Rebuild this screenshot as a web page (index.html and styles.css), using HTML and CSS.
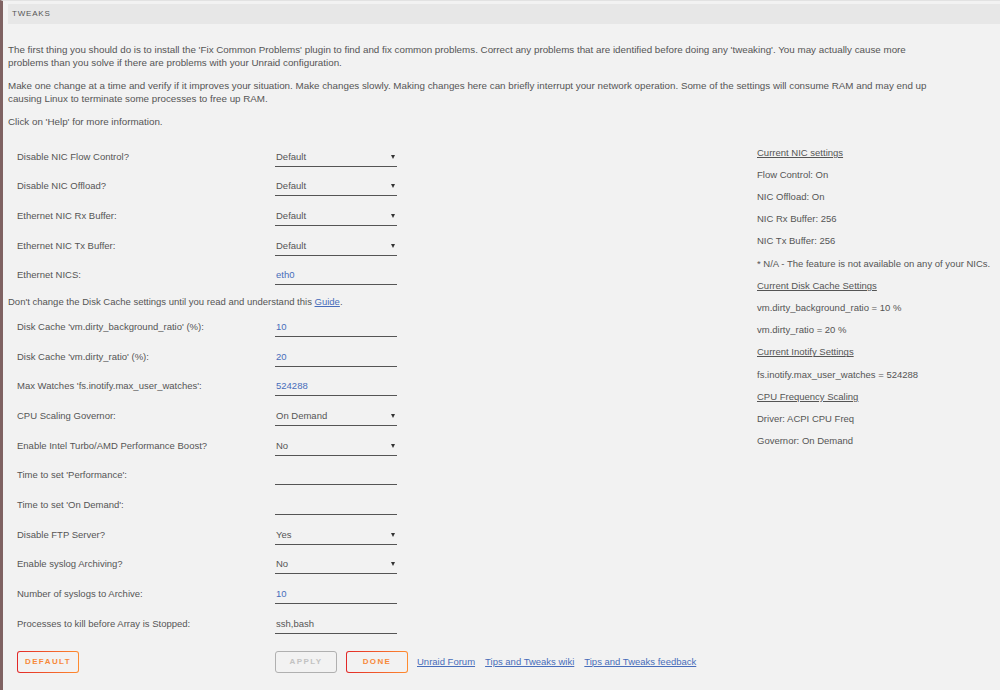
FILE: index.html
```html
<!DOCTYPE html>
<html>
<head>
<meta charset="utf-8">
<title>Tweaks</title>
<link rel="stylesheet" href="styles.css">
</head>
<body>
<div class="page">
  <div class="title">TWEAKS</div>
  <p class="intro">The first thing you should do is to install the 'Fix Common Problems' plugin to find and fix common problems. Correct any problems that are identified before doing any 'tweaking'. You may actually cause more<br>problems than you solve if there are problems with your Unraid configuration.</p>
  <p class="intro">Make one change at a time and verify if it improves your situation. Make changes slowly. Making changes here can briefly interrupt your network operation. Some of the settings will consume RAM and may end up<br>causing Linux to terminate some processes to free up RAM.</p>
  <p class="intro">Click on 'Help' for more information.</p>

  <div class="main">
    <div class="form">
      <div class="row"><div class="label">Disable NIC Flow Control?</div><div class="field select">Default</div></div>
      <div class="row"><div class="label">Disable NIC Offload?</div><div class="field select">Default</div></div>
      <div class="row"><div class="label">Ethernet NIC Rx Buffer:</div><div class="field select">Default</div></div>
      <div class="row"><div class="label">Ethernet NIC Tx Buffer:</div><div class="field select">Default</div></div>
      <div class="row"><div class="label">Ethernet NICS:</div><div class="field input blue">eth0</div></div>
      <div class="note">Don't change the Disk Cache settings until you read and understand this <a href="#">Guide</a>.</div>
      <div class="row"><div class="label">Disk Cache 'vm.dirty_background_ratio' (%):</div><div class="field input blue">10</div></div>
      <div class="row"><div class="label">Disk Cache 'vm.dirty_ratio' (%):</div><div class="field input blue">20</div></div>
      <div class="row"><div class="label">Max Watches 'fs.inotify.max_user_watches':</div><div class="field input blue">524288</div></div>
      <div class="row"><div class="label">CPU Scaling Governor:</div><div class="field select">On Demand</div></div>
      <div class="row"><div class="label">Enable Intel Turbo/AMD Performance Boost?</div><div class="field select">No</div></div>
      <div class="row"><div class="label">Time to set 'Performance':</div><div class="field input"></div></div>
      <div class="row"><div class="label">Time to set 'On Demand':</div><div class="field input"></div></div>
      <div class="row"><div class="label">Disable FTP Server?</div><div class="field select">Yes</div></div>
      <div class="row"><div class="label">Enable syslog Archiving?</div><div class="field select">No</div></div>
      <div class="row"><div class="label">Number of syslogs to Archive:</div><div class="field input blue">10</div></div>
      <div class="row"><div class="label">Processes to kill before Array is Stopped:</div><div class="field input">ssh,bash</div></div>
      <div class="actions">
        <div class="left"><button class="btn">DEFAULT</button></div>
        <div class="right">
          <button class="btn disabled">APPLY</button>
          <button class="btn">DONE</button>
          <a href="#">Unraid Forum</a>
          <a href="#">Tips and Tweaks wiki</a>
          <a href="#">Tips and Tweaks feedback</a>
        </div>
      </div>
    </div>
    <div class="info">
      <div class="line head">Current NIC settings</div>
      <div class="line">Flow Control: On</div>
      <div class="line">NIC Offload: On</div>
      <div class="line">NIC Rx Buffer: 256</div>
      <div class="line">NIC Tx Buffer: 256</div>
      <div class="line">* N/A - The feature is not available on any of your NICs.</div>
      <div class="line head">Current Disk Cache Settings</div>
      <div class="line">vm.dirty_background_ratio = 10 %</div>
      <div class="line">vm.dirty_ratio = 20 %</div>
      <div class="line head">Current Inotify Settings</div>
      <div class="line">fs.inotify.max_user_watches = 524288</div>
      <div class="line head">CPU Frequency Scaling</div>
      <div class="line">Driver: ACPI CPU Freq</div>
      <div class="line">Governor: On Demand</div>
    </div>
  </div>
</div>
</body>
</html>
```
FILE: styles.css
```css
html, body {
  margin: 0;
  padding: 0;
  background: #f2f2f2;
}
body {
  font-family: "Liberation Sans", Arial, sans-serif;
  font-size: 9.5px;
  color: #555;
}
.page {
  border-left: 3px solid #7f6262;
  min-height: 690px;
  box-sizing: border-box;
  padding: 3px 0 0 5px;
  border-top: 1px solid #e2e2e2;
}
.title {
  height: 20px;
  line-height: 20px;
  background: #e7e7e7;
  padding-left: 4px;
  font-size: 8px;
  letter-spacing: 0.8px;
  color: #555;
}
.intro {
  margin: 0;
  line-height: 12.5px;
  font-size: 9.8px;
}
.intro:nth-of-type(1) { margin-top: 20px; }
.intro + .intro { margin-top: 11px; }
.main {
  display: flex;
  margin-top: 13px;
}
.form {
  flex: 0 0 749px;
  padding-top: 5px;
}
.row {
  display: flex;
  height: 29.7px;
}
.label {
  width: 258px;
  padding-left: 9px;
  line-height: 20px;
}
.field {
  position: relative;
  width: 121px;
  height: 19px;
  line-height: 20px;
  border-bottom: 1px solid #555;
  padding-left: 1px;
  box-sizing: content-box;
}
.field.select::after {
  content: "";
  position: absolute;
  right: 2px;
  top: 8px;
  border-left: 2.5px solid transparent;
  border-right: 2.5px solid transparent;
  border-top: 4px solid #333;
}
.blue { color: #486dba; }
.note {
  line-height: 14px;
  margin-bottom: 8px;
}
a {
  color: #486dba;
  text-decoration: underline;
}
.actions {
  display: flex;
  margin-top: 7px;
  padding-left: 9px;
  align-items: center;
}
.actions .left {
  width: 258px;
}
.actions .right {
  display: flex;
  align-items: center;
  gap: 9px;
}
.actions .right a {
  margin-right: 1px;
}
.btn {
  font-family: "Liberation Sans", Arial, sans-serif;
  font-weight: bold;
  font-size: 8px;
  letter-spacing: 1.4px;
  width: 62px;
  height: 22px;
  padding: 0;
  border: 1px solid transparent;
  border-radius: 3px;
  background: linear-gradient(#f2f2f2, #f2f2f2) padding-box,
              linear-gradient(90deg, #e22828, #ff8c2f) border-box;
  color: #f7893a;
}
.btn.disabled {
  background: #f2f2f2;
  border: 1px solid #b0b0b0;
  color: #c2c2c2;
}
.info {
  flex: 1;
}
.line {
  height: 22.23px;
  line-height: 22.23px;
  white-space: nowrap;
}
.line.head {
  text-decoration: underline;
}
```
